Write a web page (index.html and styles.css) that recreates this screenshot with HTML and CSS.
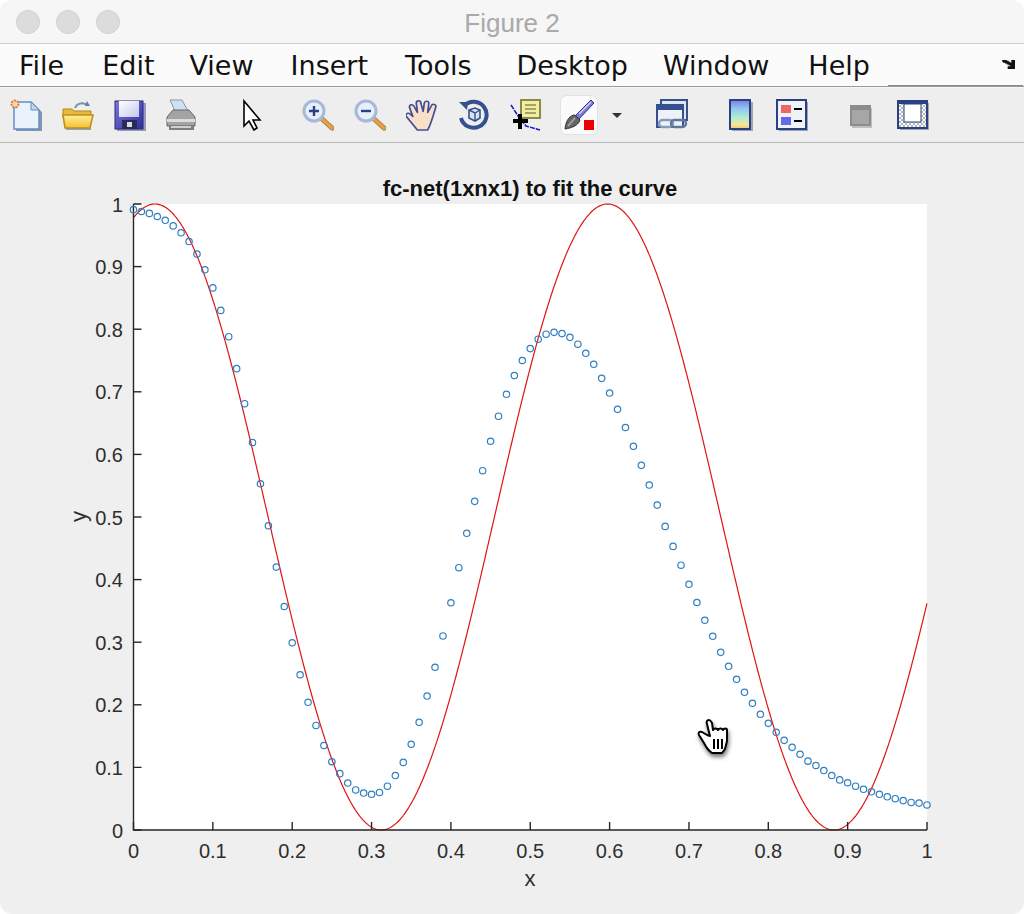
FILE: index.html
```html
<!DOCTYPE html>
<html lang="en">
<head>
    <meta charset="UTF-8">
    <title>Figure 2</title>
    <link rel="stylesheet" href="styles.css">
</head>
<body>
<div class="window">

    <div class="titlebar">
        <div class="lights">
            <span class="light"></span>
            <span class="light"></span>
            <span class="light"></span>
        </div>
        <div class="title">Figure 2</div>
    </div>

    <div class="menubar">
        <span class="menu">File</span>
        <span class="menu">Edit</span>
        <span class="menu">View</span>
        <span class="menu">Insert</span>
        <span class="menu">Tools</span>
        <span class="menu">Desktop</span>
        <span class="menu">Window</span>
        <span class="menu">Help</span>
        <span class="menu-tail"></span>
        <svg class="undock" viewBox="0 0 16 12">
            <path d="M0 1h5v1h2v1h2v1h1V1h4v10H6V8h3V7H7V6H5V5H3V4H1V3H0z" fill="#111"/>
        </svg>
    </div>

    <div class="toolbar">
        <!-- new figure -->
        <svg class="tool" viewBox="0 0 32 32">
            <path d="M6 5h17l9 8v19H6z" fill="#8a93ad"/>
            <path d="M4 3h17l8 8v19H4z" fill="#eaf3fc" stroke="#5f8fc8" stroke-width="1.5"/>
            <path d="M21 3v8h8z" fill="#c5d4e6" stroke="#5f8fc8" stroke-width="1"/>
            <circle cx="5" cy="5" r="3.5" fill="#f7d9b8" stroke="#e6743a" stroke-width="2" stroke-dasharray="2 1"/>
        </svg>
        <!-- open -->
        <svg class="tool" viewBox="0 0 32 32">
            <defs>
                <linearGradient id="folder" x1="0" y1="0" x2="0" y2="1">
                    <stop offset="0" stop-color="#fff09a"/>
                    <stop offset="1" stop-color="#f3c030"/>
                </linearGradient>
            </defs>
            <path d="M13 9c2-5 8-6 12-3" fill="none" stroke="#7f93ad" stroke-width="2"/>
            <path d="M25 2l3 5-5 0z" fill="#5f7fa8"/>
            <path d="M1 10h9l2 2h17v7H1z" fill="#e8b93a" stroke="#b5851a"/>
            <path d="M1 16h30l-3 13H3z" fill="url(#folder)" stroke="#c0901c" stroke-width="1.6"/>
            <path d="M4 30h25" stroke="#8a8a7a" stroke-width="1.5"/>
        </svg>
        <!-- save -->
        <svg class="tool" viewBox="0 0 32 32">
            <defs>
                <linearGradient id="disk" x1="0" y1="0" x2="1" y2="1">
                    <stop offset="0" stop-color="#7a7ae0"/>
                    <stop offset="1" stop-color="#2e2e9a"/>
                </linearGradient>
                <linearGradient id="disk-label" x1="0" y1="0" x2="1" y2="1">
                    <stop offset="0" stop-color="#fff"/>
                    <stop offset="1" stop-color="#c4c8ec"/>
                </linearGradient>
            </defs>
            <rect x="3" y="4" width="29" height="28" fill="#9a9ab8"/>
            <rect x="1" y="2" width="28" height="28" fill="url(#disk)" stroke="#28287a"/>
            <rect x="5" y="2" width="20" height="16" fill="url(#disk-label)"/>
            <rect x="8" y="21" width="15" height="9" fill="#2a2a5a"/>
            <rect x="13" y="23" width="5" height="5" fill="#dcdcdc"/>
        </svg>
        <!-- print -->
        <svg class="tool" viewBox="0 0 32 32">
            <path d="M4 1h12l6 11H9z" fill="#cfe0f2" stroke="#8a97a8"/>
            <path d="M1 18l6-7h16l6 7v9H1z" fill="#a4a4a4" stroke="#666"/>
            <path d="M1 20h28v3H1z" fill="#dcdcdc"/>
            <path d="M3 26h25v5H3z" fill="#7e7e7e"/>
            <path d="M5 28h20" stroke="#d0d0d0" stroke-width="2"/>
        </svg>
        <!-- pointer -->
        <svg class="tool tool-pointer" viewBox="0 0 32 32">
            <path d="M8 2v25l5-5 5 9 3-2-4-8h7z" fill="#fff" stroke="#000" stroke-width="1.6"/>
        </svg>
        <!-- zoom in -->
        <svg class="tool tool-zoom" viewBox="0 0 32 32">
            <path d="M19 19l11 10" stroke="#8a7a5a" stroke-width="5" stroke-linecap="round"/>
            <path d="M19 19l11 10" stroke="#ef9f3a" stroke-width="3.4" stroke-linecap="round"/>
            <circle cx="12" cy="12" r="10" fill="#e6f0fa" stroke="#a8b8d8" stroke-width="3"/>
            <path d="M7 12h10M12 7v10" stroke="#2a3f8a" stroke-width="2.4"/>
        </svg>
        <!-- zoom out -->
        <svg class="tool" viewBox="0 0 32 32">
            <path d="M19 19l11 10" stroke="#8a7a5a" stroke-width="5" stroke-linecap="round"/>
            <path d="M19 19l11 10" stroke="#ef9f3a" stroke-width="3.4" stroke-linecap="round"/>
            <circle cx="12" cy="12" r="10" fill="#e6f0fa" stroke="#a8b8d8" stroke-width="3"/>
            <path d="M7 12h10" stroke="#2a3f8a" stroke-width="2.4"/>
        </svg>
        <!-- pan -->
        <svg class="tool" viewBox="1 1 28 31" preserveAspectRatio="none">
            <path d="M11 31C8 27 5 23 2 19c-2-2-1-5 2-4l3 3-3-9c0-3 3-3 4-1l3 6-1-9c0-3 4-3 4 0l2 8 1-8c1-3 4-2 4 0l-1 9 3-6c1-3 5-2 4 1l-3 11c-1 3-2 7-4 11z" fill="#fbe0c8" stroke="#3f4f98" stroke-width="1.5" stroke-linejoin="round"/>
        </svg>
        <!-- rotate -->
        <svg class="tool" viewBox="0 0 32 32">
            <path d="M6 7a13 13 0 1 1-3 12" fill="none" stroke="#34508f" stroke-width="4"/>
            <path d="M1 3l9 0-1 8z" fill="#34508f"/>
            <path d="M11 11l6-2 5 2v8l-5 3-6-3z" fill="#dbe3ee" stroke="#34508f" stroke-width="1.6"/>
            <path d="M11 11l6 3 5-3M17 14v8" fill="none" stroke="#34508f" stroke-width="1.4"/>
        </svg>
        <!-- data cursor -->
        <svg class="tool" viewBox="0 0 32 32">
            <path d="M1 6l9 14 6 7 14 4" fill="none" stroke="#1414cc" stroke-width="1.5" stroke-dasharray="5 1"/>
            <rect x="11" y="1" width="19" height="18" fill="#f4eda0" stroke="#8a8a4a" stroke-width="2"/>
            <path d="M15 6h11M15 10h11M15 14h11" stroke="#8a8a5a" stroke-width="1.5"/>
            <path d="M10 15v15M3 22h15" stroke="#000" stroke-width="4"/>
        </svg>
        <!-- brush, pressed -->
        <div class="tool-pressed">
            <svg class="tool" viewBox="0 0 32 32">
                <path d="M12 17L28 1l3 3-15 16z" fill="#7a7ad8" stroke="#34348a"/>
                <path d="M16 15L28 3" stroke="#d4d4f4" stroke-width="1.4"/>
                <path d="M12 16c-5 0-9 5-10 14 6-1 13-3 15-9z" fill="#666" stroke="#333"/>
                <path d="M5 27l7-8" stroke="#aaa" stroke-width="1.5"/>
                <rect x="21" y="21" width="10" height="10" fill="#ee0000"/>
            </svg>
        </div>
        <span class="dropdown"></span>
        <!-- link -->
        <svg class="tool tool-link" viewBox="0 0 32 32">
            <rect x="5" y="1" width="26" height="20" fill="#dfe6f2" stroke="#34508f" stroke-width="2"/>
            <rect x="1" y="6" width="26" height="22" fill="#eef2f8" stroke="#34508f" stroke-width="2"/>
            <rect x="1" y="6" width="26" height="5" fill="#34508f"/>
            <rect x="3" y="21" width="14" height="7" rx="3.5" fill="none" stroke="#8a9bb8" stroke-width="2.4"/>
            <rect x="15" y="21" width="15" height="7" rx="3.5" fill="none" stroke="#5f789f" stroke-width="2.4"/>
        </svg>
        <!-- colorbar -->
        <svg class="tool tool-colorbar" viewBox="0 0 32 32">
            <defs>
                <linearGradient id="parula" x1="0" y1="0" x2="0" y2="1">
                    <stop offset="0" stop-color="#7c7ce8"/>
                    <stop offset="0.3" stop-color="#8fc8f0"/>
                    <stop offset="0.6" stop-color="#b0eccf"/>
                    <stop offset="0.85" stop-color="#f4e89a"/>
                    <stop offset="1" stop-color="#f2c070"/>
                </linearGradient>
            </defs>
            <rect x="8" y="3" width="21" height="29" fill="#a0a4b0"/>
            <rect x="6" y="1" width="20" height="29" fill="url(#parula)" stroke="#2a4080" stroke-width="2"/>
        </svg>
        <!-- legend -->
        <svg class="tool" viewBox="0 0 32 32">
            <rect x="3" y="3" width="29" height="29" fill="#a0a4b0"/>
            <rect x="1" y="1" width="29" height="29" fill="#eef3fa" stroke="#2a4080" stroke-width="2"/>
            <rect x="5" y="6" width="10" height="8" fill="#ee6666"/>
            <rect x="5" y="18" width="10" height="8" fill="#6666ee"/>
            <path d="M18 10h8M18 22h8" stroke="#000" stroke-width="2"/>
        </svg>
        <!-- hide plot tools, disabled -->
        <svg class="tool tool-hide" viewBox="0 0 32 32">
            <rect x="7" y="9" width="20" height="20" fill="#c0c0c0"/>
            <rect x="6" y="7" width="19" height="19" fill="#a6a6a6" stroke="#8c8c8c" stroke-width="2"/>
            <rect x="6" y="7" width="19" height="4" fill="#8c8c8c"/>
        </svg>
        <!-- show plot tools and dock -->
        <svg class="tool" viewBox="0 0 32 32">
            <defs>
                <pattern id="checker" width="4" height="4" patternUnits="userSpaceOnUse">
                    <rect width="4" height="4" fill="#fff"/>
                    <rect width="2" height="2" fill="#b4b4b4"/>
                    <rect x="2" y="2" width="2" height="2" fill="#b4b4b4"/>
                </pattern>
            </defs>
            <rect x="3" y="4" width="29" height="27" fill="#a0a4b0"/>
            <rect x="1" y="2" width="29" height="27" fill="url(#checker)" stroke="#2a4080" stroke-width="2"/>
            <rect x="1" y="2" width="29" height="3" fill="#2a4080"/>
            <rect x="7" y="5" width="17" height="18" fill="#fff" stroke="#2a4080"/>
        </svg>
    </div>

    <div class="figure">
        <svg id="plot" class="plot" viewBox="0 143 1024 771"></svg>
        <svg class="hand-cursor" viewBox="0 0 32 38">
            <path d="M12 3c-2 0-3 2-2 4l3 12-3-1-5-3c-3-1-4 1-3 3l5 8c2 4 5 8 8 10h10l3-4 2-8V13c0-2-3-2-4 0-1-2-4-2-5 0-1-2-4-2-5 0L15 6c-1-2-2-3-3-3z" fill="#fff" stroke="#000" stroke-width="2" stroke-linejoin="round"/>
            <path d="M17 22v10M21 22v10M25 22v10" stroke="#000" stroke-width="2"/>
        </svg>
    </div>

</div>
<script src="chart.js"></script>
</body>
</html>
```

FILE: styles.css
```css
html, body {
    margin: 0;
    background-color: #fff;
}

.window {
    width: 1024px;
    height: 914px;
    display: flex;
    flex-direction: column;
    border-radius: 12px;
    overflow: hidden;
    background-color: #efefef;
}

/* Title bar */
.titlebar {
    height: 43px;
    flex: none;
    display: flex;
    align-items: center;
    position: relative;
    background-color: #f6f6f6;
    border-bottom: 1px solid #cfcfcf;
}

.lights {
    display: flex;
    gap: 16px;
    margin-left: 16px;
}

.light {
    width: 22px;
    height: 22px;
    border-radius: 50%;
    background-color: #dcdcdc;
    border: 1px solid #d0d0d0;
}

.title {
    position: absolute;
    left: 0;
    right: 0;
    top: 8px;
    text-align: center;
    font-family: "Liberation Sans", Arial, sans-serif;
    font-size: 26px;
    color: #a9a9a9;
}

/* Menu bar */
.menubar {
    height: 42px;
    flex: none;
    display: flex;
    align-items: center;
    gap: 38px;
    padding-left: 19px;
    position: relative;
    background-color: #fbfbfb;
    border-bottom: 1px solid #9a9a9a;
    box-sizing: content-box;
    font-family: "DejaVu Sans", Verdana, sans-serif;
    font-size: 27px;
    color: #111;
}

/* the font is a little off, so some items need a nudge */
.menu:nth-child(3) { margin-left: -3px; }
.menu:nth-child(4) { margin-left: -1px; }
.menu:nth-child(5) { margin-left: -1px; }
.menu:nth-child(6) { margin-left: 7px; }
.menu:nth-child(7) { margin-left: -3px; }
.menu:nth-child(8) { margin-left: 1px; }

.menu-tail {
    position: absolute;
    left: 888px;
    right: 1px;
    bottom: 0;
    height: 1px;
    background-color: #8c8c8c;
}

.undock {
    position: absolute;
    left: 1002px;
    top: 15px;
    width: 15px;
    height: 11px;
}

/* Toolbar */
.toolbar {
    height: 54px;
    flex: none;
    display: flex;
    align-items: center;
    gap: 20px;
    padding-left: 10px;
    background-color: #eeeeee;
    border-top: 1px solid #f6f6f6;
    border-bottom: 1px solid #b9b9b9;
}

.tool {
    width: 32px;
    height: 32px;
    flex: none;
}

.tool-pointer { margin-left: 18px; }
.tool-zoom { margin-left: 14px; }
.tool-link { margin-left: 14px; }
.tool-colorbar { margin-left: 16px; }
.tool-hide { margin-left: 17px; }

.tool-pressed {
    width: 38px;
    height: 40px;
    flex: none;
    margin-left: -2px;
    display: flex;
    align-items: center;
    justify-content: center;
    background-color: #fbfbfb;
    border: 1px solid #e2e2e2;
    border-radius: 7px;
    box-sizing: border-box;
}

.dropdown {
    width: 0;
    height: 0;
    flex: none;
    margin-left: -6px;
    border-left: 5px solid transparent;
    border-right: 5px solid transparent;
    border-top: 5px solid #333;
}

/* Plot area */
.figure {
    flex: 1;
    position: relative;
    min-height: 0;
}

.plot {
    display: block;
    width: 1024px;
    height: 771px;
}

.plot text {
    font-family: "Liberation Sans", Arial, sans-serif;
    font-size: 20px;
    fill: #2e2e2e;
}

.plot .plot-title {
    font-weight: bold;
    font-size: 22px;
    fill: #111;
}

.plot .axis-label {
    font-size: 22px;
}

.axes-bg {
    fill: #fff;
}

.axis-line {
    stroke: #262626;
    stroke-width: 1.4;
    fill: none;
}

.fit-curve {
    stroke: #e01414;
    stroke-width: 1.2;
    fill: none;
}

.sample {
    stroke: #2f7fc1;
    stroke-width: 1.2;
    fill: none;
}

.hand-cursor {
    position: absolute;
    left: 697px;
    top: 574px;
    width: 32px;
    height: 38px;
    filter: drop-shadow(1px 3px 2px rgba(0, 0, 0, 0.55));
}
```

FILE: chart.js
```js
// axes box in page pixels
var LEFT = 133.5, RIGHT = 927, TOP = 204, BOTTOM = 830;

var samples = [
    .991, .988, .985, .98, .974, .965, .954, .94, .92, .895,
    .866, .83, .788, .737, .681, .619, .553, .486, .42, .357,
    .299, .248, .204, .167, .135, .109, .09, .075, .064, .059,
    .057, .06, .07, .087, .108, .137, .172, .214, .26, .31,
    .363, .419, .474, .525, .574, .621, .661, .696, .726, .75,
    .769, .784, .792, .795, .793, .787, .776, .7615, .744, .7215,
    .698, .672, .643, .613, .5825, .551, .519, .485, .453, .423,
    .3925, .3634, .335, .3094, .2838, .2615, .2407, .22, .2024, .1848,
    .1704, .156, .1432, .132, .121, .11, .103, .095, .087, .08,
    .0755, .07, .065, .061, .057, .053, .05, .047, .044, .043,
    .04
];

var svg = document.getElementById('plot');

function px(x) { return LEFT + x * (RIGHT - LEFT); }
function py(y) { return BOTTOM - y * (BOTTOM - TOP); }

function add(tag, attrs, text) {
    var el = document.createElementNS('http://www.w3.org/2000/svg', tag);
    for (var k in attrs) el.setAttribute(k, attrs[k]);
    if (text !== undefined) el.textContent = text;
    svg.appendChild(el);
    return el;
}

function label(v) {
    if (v === 0) return '0';
    if (v === 10) return '1';
    return '0.' + v;
}

add('rect', { 'class': 'axes-bg', x: LEFT, y: TOP, width: RIGHT - LEFT, height: BOTTOM - TOP });

// fitted curve
var pts = [];
for (var i = 0; i <= 800; i++) {
    var x = i / 800;
    var y = 0.5 + 0.5 * Math.cos(2 * Math.PI * (x - 0.027) / 0.5705);
    pts.push(px(x).toFixed(2) + ',' + py(y).toFixed(2));
}
add('polyline', { 'class': 'fit-curve', points: pts.join(' ') });

// axes and ticks
add('path', { 'class': 'axis-line', d: 'M' + LEFT + ' ' + TOP + 'V' + BOTTOM + 'H' + RIGHT });
for (var t = 0; t <= 10; t++) {
    var tx = px(t / 10), ty = py(t / 10);
    add('path', { 'class': 'axis-line', d: 'M' + tx + ' ' + BOTTOM + 'v-8' });
    add('path', { 'class': 'axis-line', d: 'M' + LEFT + ' ' + ty + 'h8' });
    add('text', { x: tx, y: 858, 'text-anchor': 'middle' }, label(t));
    add('text', { x: 123, y: ty + 7.5, 'text-anchor': 'end' }, label(t));
}

// network output
samples.forEach(function (s, n) {
    add('circle', { 'class': 'sample', cx: px(n / 100), cy: py(s), r: 3.2 });
});

add('text', { 'class': 'plot-title', x: 530, y: 196, 'text-anchor': 'middle' }, 'fc-net(1xnx1) to fit the curve');
add('text', { 'class': 'axis-label', x: 530, y: 886, 'text-anchor': 'middle' }, 'x');
add('text', { 'class': 'axis-label', x: 0, y: 0, 'text-anchor': 'middle', transform: 'translate(85.5 516.5) rotate(-90)' }, 'y');
```
